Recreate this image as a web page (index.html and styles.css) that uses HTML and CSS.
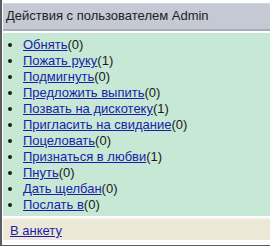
FILE: index.html
```html
<!DOCTYPE html>
<html lang="ru">
<head>
    <meta charset="UTF-8">
    <title>Действия с пользователем Admin</title>
    <link rel="stylesheet" href="styles.css">
</head>
<body>
    <div class="panel">
        <div class="panel-title">Действия с пользователем Admin</div>

        <ul class="actions">
            <li><a href="#">Обнять</a>(0)</li>
            <li><a href="#">Пожать руку</a>(1)</li>
            <li><a href="#">Подмигнуть</a>(0)</li>
            <li><a href="#">Предложить выпить</a>(0)</li>
            <li><a href="#">Позвать на дискотеку</a>(1)</li>
            <li><a href="#">Пригласить на свидание</a>(0)</li>
            <li><a href="#">Поцеловать</a>(0)</li>
            <li><a href="#">Признаться в любви</a>(1)</li>
            <li><a href="#">Пнуть</a>(0)</li>
            <li><a href="#">Дать щелбан</a>(0)</li>
            <li><a href="#">Послать в</a>(0)</li>
        </ul>

        <div class="panel-footer">
            <a href="#">В анкету</a>
        </div>
    </div>
</body>
</html>
```

FILE: styles.css
```css
* {
    margin: 0;
    padding: 0;
    box-sizing: border-box;
}

body {
    font-family: "Liberation Sans", Arial, sans-serif;
    font-size: 13px;
    line-height: 16px;
    color: #1a1a1a;
    background: #fff;
}

a {
    color: #1c1ca8;
    text-decoration: underline;
}

.panel {
    width: 100%;
    height: 246px;
    border-left: 2px solid #5a5d62;
    border-bottom: 1px solid #5a5d62;
    padding: 3px 0 0 1px;
    display: flex;
    flex-direction: column;
    gap: 2px;
}

.panel-title {
    height: 28px;
    padding: 4px 0 0 3px;
    background: #c4c9d4;
    border-top: 1px solid #d2d6de;
    border-bottom: 2px solid #a7acb8;
    color: #222;
}

.actions {
    list-style: disc;
    padding: 4px 0 3px 20px;
    background: #c6e8d5;
}

.panel-footer {
    height: 22px;
    padding: 3px 0 0 7px;
    background: #ece8d7;
    border-top: 2px solid #f1eee2;
}
```
